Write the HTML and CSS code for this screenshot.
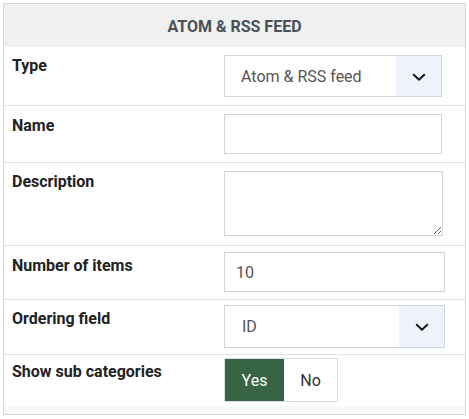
FILE: index.html
```html
<!DOCTYPE html>
<html>
<head>
<meta charset="utf-8">
<link rel="stylesheet" href="styles.css">
</head>
<body>
<div class="panel">
  <div class="panel-head">ATOM &amp; RSS FEED</div>
  <div class="row row-type">
    <div class="label">Type</div>
    <div class="select sel-type">
      <span class="sel-text">Atom &amp; RSS feed</span>
      <span class="sel-btn"><svg width="14" height="8" viewBox="0 0 14 8"><path d="M1.2 1.2 L7 6.6 L12.8 1.2" fill="none" stroke="#111" stroke-width="1.9"/></svg></span>
    </div>
  </div>
  <div class="row row-name">
    <div class="label">Name</div>
    <input class="input in-name" type="text">
  </div>
  <div class="row row-desc">
    <div class="label">Description</div>
    <textarea class="textarea"></textarea>
  </div>
  <div class="row row-num">
    <div class="label">Number of items</div>
    <input class="input in-num" type="text" value="10">
  </div>
  <div class="row row-order">
    <div class="label">Ordering field</div>
    <div class="select sel-order">
      <span class="sel-text">ID</span>
      <span class="sel-btn"><svg width="14" height="8" viewBox="0 0 14 8"><path d="M1.2 1.2 L7 6.6 L12.8 1.2" fill="none" stroke="#111" stroke-width="1.9"/></svg></span>
    </div>
  </div>
  <div class="row row-show">
    <div class="label">Show sub categories</div>
    <div class="toggle">
      <span class="opt opt-yes">Yes</span>
      <span class="opt opt-no">No</span>
    </div>
  </div>
  <div class="panel-foot"></div>
</div>
</body>
</html>
```
FILE: styles.css
```css
* { box-sizing: border-box; }
html, body { margin: 0; padding: 0; background: #fff; }
body {
  padding: 3px;
  font-family: Roboto, "Liberation Sans", Arial, sans-serif;
  color: #212529;
}
.panel {
  width: 463px;
  border: 1px solid #d5d7da;
}
.panel-head {
  height: 43px;
  background: #f0f0f0;
  color: #495057;
  font-weight: 700;
  font-size: 16px;
  display: flex;
  align-items: center;
  justify-content: center;
  padding-top: 1px;
}
.row {
  display: flex;
  align-items: flex-start;
  border-bottom: 1px solid #dfe1e4;
  padding-left: 8px;
}
.label {
  width: 212px;
  flex: none;
  font-weight: 700;
  font-size: 16px;
  color: #222;
  line-height: 18px;
}
.row-type { height: 59px; padding-top: 8px; }
.row-type .label { margin-top: 2px; }
.row-name { height: 57px; padding-top: 8px; }
.row-name .label { margin-top: 3px; }
.row-desc { height: 83px; padding-top: 8px; }
.row-desc .label { margin-top: 2px; }
.row-num { height: 54px; padding-top: 6px; }
.row-num .label { margin-top: 5px; }
.row-order { height: 55px; padding-top: 5px; }
.row-order .label { margin-top: 5px; }
.row-show { height: 51px; padding-top: 3px; border-bottom: none; }
.row-show .label { margin-top: 5px; }

.select {
  display: flex;
  align-items: stretch;
  border: 1px solid #ced4da;
  height: 42px;
  background: #fff;
}
.sel-type { width: 218px; }
.sel-order { width: 221px; height: 43px; }
.sel-text {
  flex: 1;
  display: flex;
  align-items: center;
  padding-left: 16px;
  font-size: 16px;
  color: #555;
}
.sel-order .sel-text { padding-left: 17px; }
.sel-btn {
  width: 45px;
  flex: none;
  background: #eef3fb;
  display: flex;
  align-items: center;
  justify-content: center;
  padding-top: 1px;
}
.input {
  display: block;
  margin: 0;
  border: 1px solid #ced4da;
  border-radius: 0;
  outline: none;
  height: 40px;
  padding: 0 10px;
  font-family: Roboto, "Liberation Sans", Arial, sans-serif;
  font-size: 16px;
  color: #555;
  background: #fff;
}
.in-name { width: 218px; }
.in-num { width: 221px; padding-left: 11px; }
.textarea {
  display: block;
  margin: 0;
  width: 219px;
  height: 65px;
  border: 1px solid #ced4da;
  border-radius: 0;
  outline: none;
  padding: 6px 10px;
  font-family: Roboto, "Liberation Sans", Arial, sans-serif;
  font-size: 16px;
}
.toggle {
  display: flex;
  height: 44px;
  border: 1px solid #d9dce0;
}
.opt {
  display: flex;
  align-items: center;
  justify-content: center;
  font-size: 16px;
}
.opt-yes {
  width: 59px;
  background: #386446;
  color: #fff;
}
.opt-no {
  width: 53px;
  background: #fff;
  color: #333;
}
.panel-foot {
  height: 8px;
  background: #f9f9f9;
}
```
